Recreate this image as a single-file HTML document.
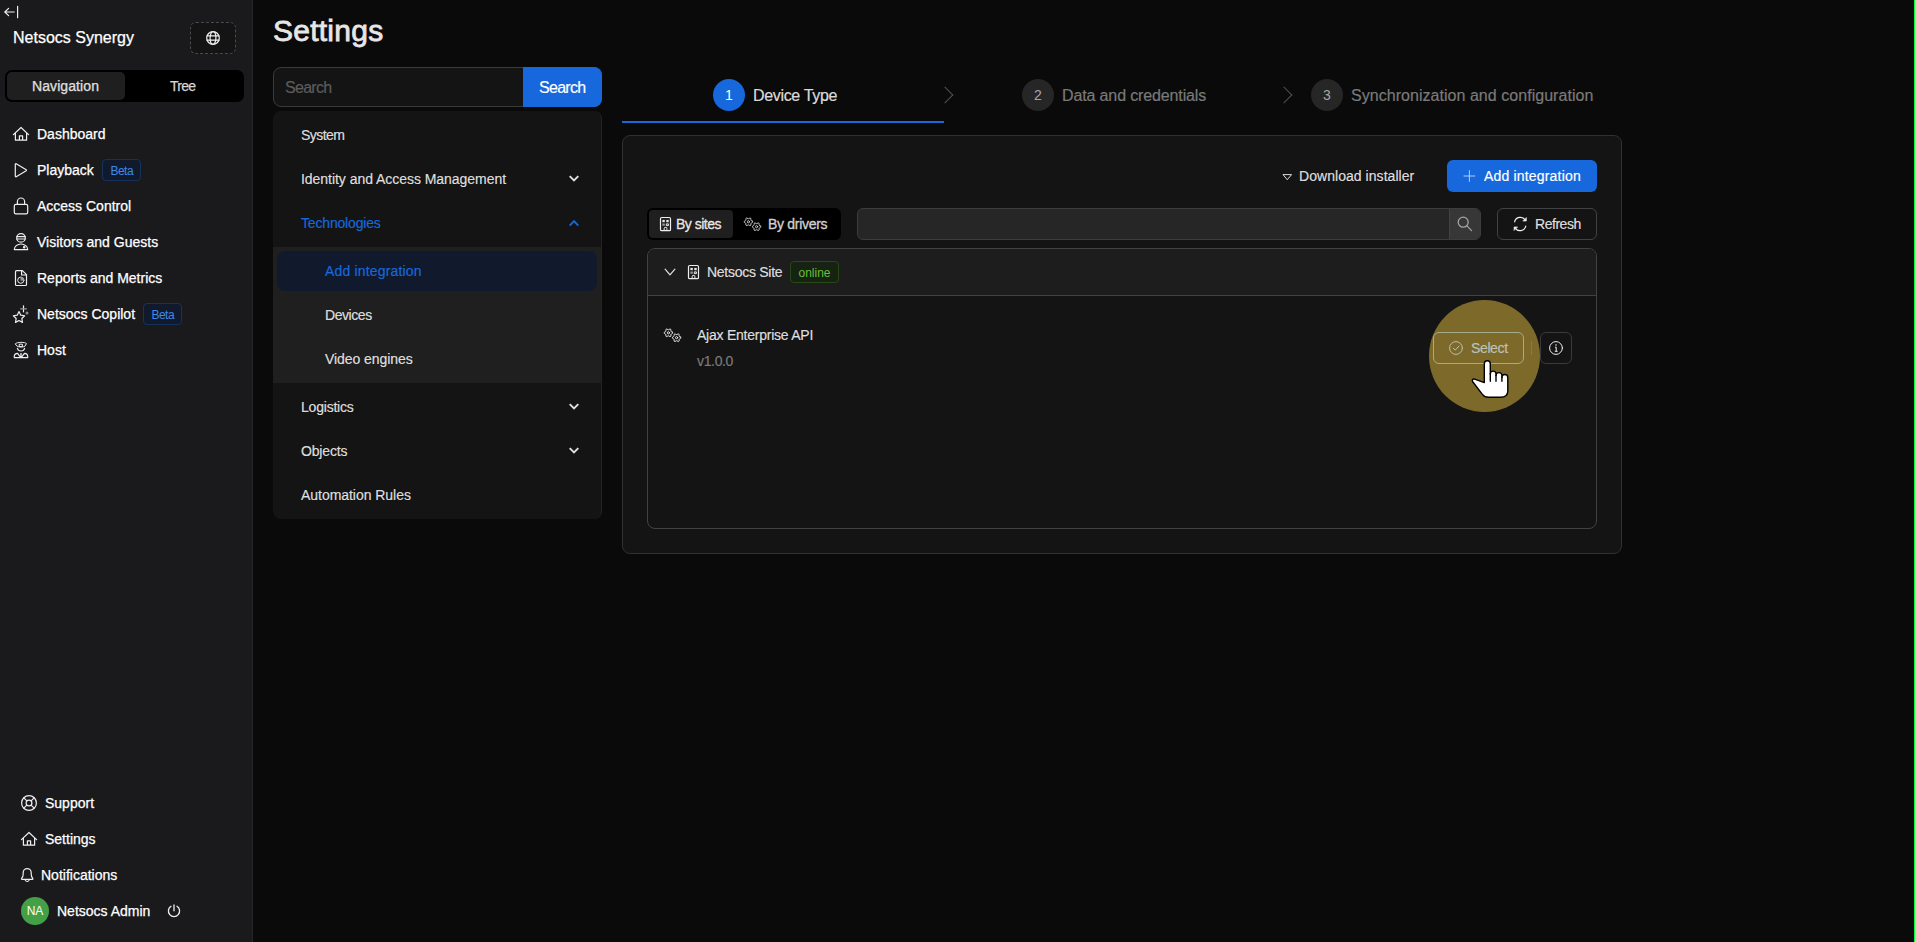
<!DOCTYPE html>
<html lang="en">
<head>
<meta charset="utf-8">
<title>Settings - Netsocs Synergy</title>
<style>
*{box-sizing:border-box;margin:0;padding:0}
html,body{width:1915px;height:942px;overflow:hidden;background:#0a0a0a}
body{position:relative;font-family:"Liberation Sans",sans-serif;font-size:14px;color:rgba(255,255,255,.85);-webkit-font-smoothing:antialiased}
.abs{position:absolute}
.t{position:absolute;white-space:nowrap;line-height:22px;height:22px;-webkit-text-stroke-width:.18px}
svg{position:absolute;overflow:visible}
.ic{fill:none;stroke:#efefef;stroke-width:1.2;stroke-linecap:round;stroke-linejoin:round}

/* sidebar */
#side{position:absolute;left:0;top:0;width:253px;height:942px;background:#1a1a1d;border-right:1px solid #262628}
#side .t{color:#fff;font-size:14px;-webkit-text-stroke-width:.25px}
.seg{position:absolute;background:#000;border-radius:7px}
.segsel{position:absolute;background:#1f1f1f;border-radius:5px}
.beta{position:absolute;height:22px;border:1px solid #15325b;background:#111a2c;border-radius:4px;color:#3c89e8;font-size:12px;line-height:20px;padding-top:1px;text-align:center;letter-spacing:-.5px;padding-left:.5px}

/* settings menu */
#menu{position:absolute;left:273px;top:111px;width:329px;height:408px;background:#141414;border-right:1px solid #232323;border-radius:8px 8px 8px 8px}
#sub{position:absolute;left:0;top:136px;width:328px;height:136px;background:#1f1f1f}
#selitem{position:absolute;left:4px;top:140px;width:320px;height:40px;border-radius:8px;background:#111a2c}
.blue{color:#1668dc}

/* steps */
.stepc{position:absolute;top:79px;width:32px;height:32px;border-radius:50%;text-align:center;line-height:33px;font-size:14px}
.chev{position:absolute;top:89px;width:12px;height:12px;border-top:1px solid #4f4f4f;border-right:1px solid #4f4f4f;transform:rotate(45deg)}
/* card */
#card{position:absolute;left:622px;top:135px;width:1000px;height:419px;background:#141414;border:1px solid #303030;border-radius:8px}
#collapse{position:absolute;left:647px;top:248px;width:950px;height:281px;border:1px solid #424242;border-radius:8px;background:#141414;overflow:hidden}
#chead{position:absolute;left:0;top:0;width:948px;height:47px;background:#1d1d1d;border-bottom:1px solid #424242}
.btn{position:absolute;height:32px;border-radius:6px}
</style>
</head>
<body>
<!-- SIDEBAR -->
<div id="side">
  <svg style="left:4px;top:6px" width="15" height="12" viewBox="0 0 15 12"><path class="ic" d="M0.8 6H10.2M0.8 6L4.6 2.4M0.8 6L4.6 9.6M13.6 0.3V11.7" stroke-width="1"/></svg>
  <div class="t" style="left:13px;top:27px;font-size:16px">Netsocs Synergy</div>
  <div class="abs" style="left:190px;top:22px;width:46px;height:32px;border:1px dashed #4a4a4a;border-radius:6px;background:#141414"></div>
  <svg style="left:206px;top:31px" width="14" height="14" viewBox="0 0 14 14"><g class="ic" stroke-width="1"><circle cx="7" cy="7" r="6.3"/><ellipse cx="7" cy="7" rx="2.9" ry="6.3"/><path d="M1 4.9H13M1 9.1H13"/></g></svg>

  <div class="seg" style="left:5px;top:70px;width:239px;height:32px"></div>
  <div class="segsel" style="left:7px;top:72px;width:118px;height:28px"></div>
  <div class="t" style="left:32px;top:75px;color:#e0e0e0;letter-spacing:0.09px">Navigation</div>
  <div class="t" style="left:170px;top:75px;color:#d6d6d6;letter-spacing:-0.71px">Tree</div>

  <div class="t" style="left:37px;top:123px">Dashboard</div>
  <div class="t" style="left:37px;top:159px">Playback</div>
  <div class="beta" style="left:102px;top:159px;width:39px">Beta</div>
  <div class="t" style="left:37px;top:195px">Access Control</div>
  <div class="t" style="left:37px;top:231px">Visitors and Guests</div>
  <div class="t" style="left:37px;top:267px">Reports and Metrics</div>
  <div class="t" style="left:37px;top:303px">Netsocs Copilot</div>
  <div class="beta" style="left:143px;top:303px;width:39px">Beta</div>
  <div class="t" style="left:37px;top:339px">Host</div>

  <div class="t" style="left:45px;top:792px">Support</div>
  <div class="t" style="left:45px;top:828px">Settings</div>
  <div class="t" style="left:41px;top:864px">Notifications</div>
  <div class="abs" style="left:21px;top:897px;width:28px;height:28px;border-radius:50%;background:#43a047;color:#fff;font-size:12px;line-height:28px;text-align:center">NA</div>
  <div class="t" style="left:57px;top:900px">Netsocs Admin</div>
</div>

<!-- MAIN -->
<div class="t" style="left:273px;top:12px;font-size:30px;line-height:38px;height:38px;color:#e6e6e6;-webkit-text-stroke:.8px #e6e6e6;letter-spacing:.25px">Settings</div>

<div class="abs" style="left:273px;top:67px;width:329px;height:40px;border:1px solid #3a3a3a;border-radius:8px;background:#141414"></div>
<div class="abs" style="left:523px;top:67px;width:79px;height:40px;border-radius:0 8px 8px 0;background:#1668dc"></div>
<div class="t" style="left:285px;top:77px;font-size:16px;color:#5c5c5c;letter-spacing:-.7px">Search</div>
<div class="t" style="left:539px;top:77px;font-size:16px;color:#fff;letter-spacing:-.7px">Search</div>

<div id="menu">
  <div id="sub"></div>
  <div id="selitem"></div>
  <div class="t" style="left:28px;top:13px;letter-spacing:-0.56px">System</div>
  <div class="t" style="left:28px;top:57px;letter-spacing:-0.04px">Identity and Access Management</div>
  <div class="t blue" style="left:28px;top:101px;letter-spacing:-0.17px">Technologies</div>
  <div class="t blue" style="left:52px;top:149px;letter-spacing:.17px">Add integration</div>
  <div class="t" style="left:52px;top:193px;letter-spacing:-0.43px">Devices</div>
  <div class="t" style="left:52px;top:237px;letter-spacing:-0.06px">Video engines</div>
  <div class="t" style="left:28px;top:285px;letter-spacing:-0.21px">Logistics</div>
  <div class="t" style="left:28px;top:329px;letter-spacing:-0.16px">Objects</div>
  <div class="t" style="left:28px;top:373px;letter-spacing:-0.04px">Automation Rules</div>
</div>

<!-- STEPS -->
<div class="stepc" style="left:713px;background:#1668dc;color:#fff">1</div>
<div class="t" style="left:753px;top:84px;font-size:16px;line-height:24px;height:24px;letter-spacing:-.33px">Device Type</div>
<div class="abs" style="left:622px;top:121px;width:322px;height:2px;background:#1668dc"></div>
<div class="chev" style="left:939px"></div>
<div class="stepc" style="left:1022px;background:#262626;color:#a6a6a6">2</div>
<div class="t" style="left:1062px;top:84px;font-size:16px;line-height:24px;height:24px;color:#7a7a7a;letter-spacing:-.13px">Data and credentials</div>
<div class="chev" style="left:1278px"></div>
<div class="stepc" style="left:1311px;background:#262626;color:#a6a6a6">3</div>
<div class="t" style="left:1351px;top:84px;font-size:16px;line-height:24px;height:24px;color:#7a7a7a;letter-spacing:.04px">Synchronization and configuration</div>

<!-- CARD -->
<div id="card"></div>
<div class="t" style="left:1299px;top:165px;letter-spacing:.05px">Download installer</div>
<div class="btn" style="left:1447px;top:160px;width:150px;background:#1668dc"></div>
<div class="t" style="left:1484px;top:165px;color:#fff;letter-spacing:.18px">Add integration</div>

<div class="abs" style="left:647px;top:208px;width:194px;height:32px;background:#000;border-radius:6px"></div>
<div class="abs" style="left:649px;top:210px;width:84px;height:28px;background:#1f1f1f;border-radius:4px"></div>
<div class="t" style="left:676px;top:213px;letter-spacing:-.5px;-webkit-text-stroke-width:.35px">By sites</div>
<div class="t" style="left:768px;top:213px;color:#cfcfcf;letter-spacing:-.3px;-webkit-text-stroke-width:.35px">By drivers</div>

<div class="abs" style="left:857px;top:208px;width:624px;height:32px;background:#262626;border:1px solid #3d3d3d;border-radius:6px"></div>
<div class="abs" style="left:1449px;top:209px;width:31px;height:30px;background:#373737;border-left:1px solid #424242;border-radius:0 5px 5px 0"></div>
<div class="btn" style="left:1497px;top:208px;width:100px;border:1px solid #424242;background:#141414"></div>
<div class="t" style="left:1535px;top:213px;letter-spacing:-.47px">Refresh</div>

<div id="collapse"><div id="chead"></div></div>
<div class="t" style="left:707px;top:261px;letter-spacing:-.27px">Netsocs Site</div>
<div class="abs" style="left:790px;top:261px;width:49px;height:22px;border:1px solid #274916;background:#162312;border-radius:4px;color:#6abe39;font-size:12px;line-height:20px;padding-top:1px;text-align:center">online</div>
<div class="t" style="left:697px;top:324px;letter-spacing:-.24px">Ajax Enterprise API</div>
<div class="t" style="left:697px;top:350px;color:#7a7a7a;letter-spacing:-.35px">v1.0.0</div>

<div class="abs" style="left:1428.6px;top:300px;width:111px;height:112px;border-radius:50%;background:#7d6a2b"></div>
<div class="btn" style="left:1433px;top:332px;width:91px;border:1px solid #a4ad8a"></div>
<div class="t" style="left:1471px;top:337px;color:#bcc3b8;letter-spacing:-.37px">Select</div>
<div class="abs" style="left:1531px;top:341px;width:1px;height:14px;background:#8c7a42"></div>
<div class="btn" style="left:1540px;top:332px;width:32px;border:1px solid #3a3a3a;background:#141414"></div>
<div class="abs" style="left:1914px;top:0;width:1px;height:942px;background:#00ff33"></div>

<svg id="icons" style="left:0;top:0" width="1915" height="942" viewBox="0 0 1915 942">
<g class="ic">
<!-- sidebar icons -->
<g transform="translate(0 0)"><path d="M13.4 134.6L21 127.5L28.6 134.6M15.4 132.9V140.2H26.6V132.9M19.4 140.2V135.9H22.6V140.2"/></g>
<path d="M15.3 164.2V176.2a.6.6 0 0 0 .9.5L26.2 170.7a.6.6 0 0 0 0-1L16.2 163.7a.6.6 0 0 0-.9.5Z"/>
<rect x="14.3" y="204.3" width="13.4" height="9.6" rx="1.6"/><path d="M17.4 204.2V201.6a3.6 3.6 0 0 1 7.2 0V204.2"/>
<!-- visitor -->
<circle cx="21" cy="237.9" r="4.3"/><path d="M16.9 236.6H25.1M17 239H25"/><path d="M14.3 249.6a6.7 5.6 0 0 1 13.4 0Z"/><circle cx="24.2" cy="247.3" r=".7" fill="#e8e8e8"/>
<!-- report -->
<path d="M22.4 270.6H16.6a1.1 1.1 0 0 0-1.1 1.1V284.4a1.1 1.1 0 0 0 1.1 1.1H25.4a1.1 1.1 0 0 0 1.1-1.1V274.7ZM21.6 270.8V275H26.3"/><circle cx="20.8" cy="280.2" r="3.1" stroke-width="1"/><path d="M20.8 280.2V277.1a3.1 3.1 0 0 1 3.1 3.1Z" fill="#999" stroke="#999" stroke-width=".6"/>
<!-- sparkle star -->
<path d="M19 311.6l1.75 3.55 3.9.57-2.82 2.76.66 3.9L19 320.5l-3.49 1.88.66-3.9-2.82-2.76 3.9-.57Z"/><path d="M23.5 305.8V311.8"/><path d="M20.7 308.9H26.4" stroke="#999"/><circle cx="27" cy="313" r="1.5" fill="#8c8c8c" stroke="none"/>
<!-- host -->
<path d="M15.5 343.6C17 341.9 25 341.9 26.5 343.6L24.9 346.2C23.5 347.3 18.5 347.3 17.1 346.2ZM19.6 344.2H22.4V346.6H19.6Z" stroke-width="1"/><path d="M17.4 348.4a3.7 3.4 0 0 0 7.2 0"/><path d="M14.3 357.6V356.6C14.3 354.6 16 353.5 17.6 353.4L20 356.6H22L24.4 353.4C26 353.5 27.7 354.6 27.7 356.6V357.6Z"/><path d="M21 353.6V355.4" stroke-width="1.4"/>
<!-- support -->
<circle cx="29" cy="803" r="7.4"/><circle cx="29" cy="803" r="2.9"/><path d="M23.8 797.8L26.9 800.9M34.2 797.8L31.1 800.9M23.8 808.2L26.9 805.1M34.2 808.2L31.1 805.1"/>
<g transform="translate(8 705)"><path d="M13.4 134.6L21 127.5L28.6 134.6M15.4 132.9V140.2H26.6V132.9M19.4 140.2V135.9H22.6V140.2"/></g>
<!-- bell -->
<path d="M21.6 878.4C22.8 877.2 23.2 876 23.2 874V872.6a4 4 0 0 1 8 0V874C31.2 876 31.6 877.2 32.8 878.4a.55.55 0 0 1-.4.95H22a.55.55 0 0 1-.4-.95Z"/><path d="M25.4 880.4a1.9 1.6 0 0 0 3.6 0"/>
<!-- power -->
<path d="M174 904.9V910.8" stroke-width="1.3"/><path d="M171 906.3a5.6 5.6 0 1 0 6 0" stroke-width="1.3"/>
</g>
<!-- menu chevrons -->
<g fill="none">
<path d="M569.7 176.1L574 180.5L578.3 176.1" stroke="#e0e0e0" stroke-width="1.9" stroke-linecap="butt" stroke-linejoin="miter"/>
<path d="M569.7 225.6L574 221.2L578.3 225.6" stroke="#1668dc" stroke-width="1.9" stroke-linecap="butt" stroke-linejoin="miter"/>
<path d="M569.7 404.1L574 408.5L578.3 404.1" stroke="#e0e0e0" stroke-width="1.9" stroke-linecap="butt" stroke-linejoin="miter"/>
<path d="M569.7 448.1L574 452.5L578.3 448.1" stroke="#e0e0e0" stroke-width="1.9" stroke-linecap="butt" stroke-linejoin="miter"/>
</g>
<g class="ic">
<!-- caret down outline -->
<path d="M1283.4 174.6H1291.6L1287.5 179.4Z" stroke-width="1" stroke="#dcdcdc"/>
<!-- plus -->
<path d="M1463.6 176H1475.2M1469.4 170.2V181.8" stroke="#b3ccf3" stroke-width="1" stroke-linecap="butt"/>
<!-- seg icons -->
<g transform="translate(660 217)"><rect x="0.5" y="0.5" width="10" height="13.2" rx="1.3"/><g fill="#e8e8e8" stroke="none"><rect x="2.4" y="2.9" width="2.4" height="2.3"/><rect x="6.3" y="2.9" width="2.4" height="2.3"/><rect x="2.4" y="6.5" width="2.4" height="2.3" opacity=".6"/></g><rect x="6.7" y="6.9" width="1.7" height="1.7" stroke-width="1"/><path d="M4.2 13.5V11.3a.9.9 0 0 1 .9-.9h.9a.9.9 0 0 1 .9.9V13.5" stroke-width="1"/></g>
<g stroke="#cfcfcf"><path d="M752.56 221.26L752.56 222.35L751.27 222.99L750.86 223.69L750.95 225.13L750.00 225.68L748.80 224.88L747.99 224.88L746.79 225.68L745.84 225.13L745.93 223.69L745.53 222.99L744.24 222.34L744.24 221.25L745.53 220.61L745.94 219.91L745.85 218.47L746.80 217.92L748.00 218.72L748.81 218.72L750.01 217.92L750.96 218.47L750.87 219.91L751.27 220.61Z" stroke-width=".9"/><circle cx="748.4" cy="221.8" r="1.1" stroke-width=".9"/><path d="M760.76 226.16L760.76 227.25L759.47 227.89L759.06 228.59L759.15 230.03L758.20 230.58L757.00 229.78L756.19 229.78L754.99 230.58L754.04 230.03L754.13 228.59L753.73 227.89L752.44 227.24L752.44 226.15L753.73 225.51L754.14 224.81L754.05 223.37L755.00 222.82L756.20 223.62L757.01 223.62L758.21 222.82L759.16 223.37L759.07 224.81L759.47 225.51Z" stroke-width=".9"/><circle cx="756.6" cy="226.7" r="1.1" stroke-width=".9"/></g>
<!-- search -->
<circle cx="1463.2" cy="222.2" r="5" stroke="#a6a6a6" stroke-width="1.25"/><path d="M1466.9 225.9L1471.6 230.6" stroke="#a6a6a6" stroke-width="1.25"/>
<!-- refresh -->
<path d="M1514.6 221.8a5.9 5.9 0 0 1 10.6-1.9M1525.8 226.2a5.9 5.9 0 0 1-10.6 1.9" stroke-width="1.2"/><path d="M1526.3 217.9V221H1523.2ZM1514.1 230.1V227H1517.2Z" fill="#e8e8e8" stroke-width=".7"/>
<!-- collapse arrow -->
<path d="M665.1 269.1L670 274.8L674.9 269.1" stroke-width="1.2" stroke="#e0e0e0"/>
<g transform="translate(688 265)"><rect x="0.5" y="0.5" width="10" height="13.2" rx="1.3"/><g fill="#e8e8e8" stroke="none"><rect x="2.4" y="2.9" width="2.4" height="2.3"/><rect x="6.3" y="2.9" width="2.4" height="2.3"/><rect x="2.4" y="6.5" width="2.4" height="2.3" opacity=".6"/></g><rect x="6.7" y="6.9" width="1.7" height="1.7" stroke-width="1"/><path d="M4.2 13.5V11.3a.9.9 0 0 1 .9-.9h.9a.9.9 0 0 1 .9.9V13.5" stroke-width="1"/></g>
<g><path d="M672.56 332.26L672.56 333.35L671.27 333.99L670.86 334.69L670.95 336.13L670.00 336.68L668.80 335.88L667.99 335.88L666.79 336.68L665.84 336.13L665.93 334.69L665.53 333.99L664.24 333.34L664.24 332.25L665.53 331.61L665.94 330.91L665.85 329.47L666.80 328.92L668.00 329.72L668.81 329.72L670.01 328.92L670.96 329.47L670.87 330.91L671.27 331.61Z" stroke-width=".9"/><circle cx="668.4" cy="332.8" r="1.1" stroke-width=".9"/><path d="M680.76 337.16L680.76 338.25L679.47 338.89L679.06 339.59L679.15 341.03L678.20 341.58L677.00 340.78L676.19 340.78L674.99 341.58L674.04 341.03L674.13 339.59L673.73 338.89L672.44 338.24L672.44 337.15L673.73 336.51L674.14 335.81L674.05 334.37L675.00 333.82L676.20 334.62L677.01 334.62L678.21 333.82L679.16 334.37L679.07 335.81L679.47 336.51Z" stroke-width=".9"/><circle cx="676.6" cy="337.7" r="1.1" stroke-width=".9"/></g>
<!-- check circle -->
<circle cx="1456" cy="348" r="6.4" stroke="#b9c0ae" stroke-width="1"/><path d="M1453.2 348.2L1455.2 350.2L1458.9 346.1" stroke="#b9c0ae" stroke-width="1"/>
<!-- info circle -->
<circle cx="1556" cy="348" r="6.4" stroke-width="1"/><path d="M1555 347.2H1556.2V351.2M1554.8 351.3H1557.6" stroke-width="1" stroke-linecap="butt"/><circle cx="1556" cy="345" r=".8" fill="#e8e8e8" stroke="none"/>
</g>
<!-- hand cursor -->
<g transform="translate(1465 355)" stroke="#000" stroke-width="1.4" stroke-linejoin="round" stroke-linecap="round">
<path d="M19.3 27.6V8.7a3 3 0 0 1 6 0V19a2.85 2.85 0 0 1 5.7 0V20.6a2.95 2.95 0 0 1 5.9 0V22.4a2.95 2.95 0 0 1 5.9 0V36C42.8 40.4 39.4 42.3 35.6 42.3H23.6C20.6 42.3 19 41.4 17.4 39.3L7.7 26.7C6.6 25.1 7.9 23.4 9.7 24.1Z" fill="#fff"/>
<path d="M25.3 18.5V26.3M31 20.3V26.3M36.9 22.1V26.3" fill="none"/>
</g>
</svg>
</body>
</html>
